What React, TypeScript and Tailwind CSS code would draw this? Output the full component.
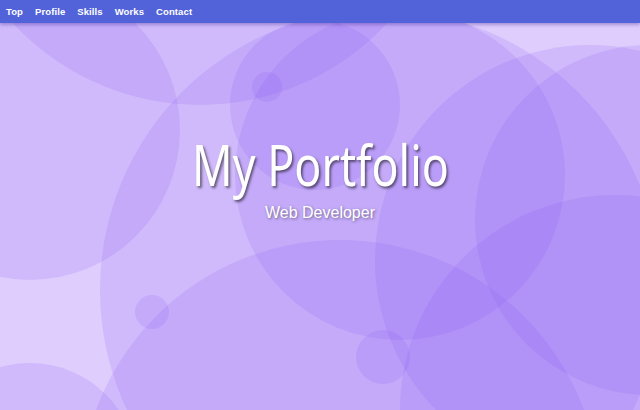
const bubbles: [number, number, number][] = [
  [30, 130, 150],
  [200, -150, 255],
  [30, 470, 107],
  [380, 290, 280],
  [340, 500, 260],
  [590, 260, 215],
  [615, 410, 215],
  [315, 105, 85],
  [400, 175, 165],
  [650, 220, 175],
  [267, 87, 15],
  [152, 312, 17],
  [383, 357, 27],
];

function Bubbles() {
  return (
    <svg className="absolute inset-0 h-full w-full" viewBox="0 0 640 410" preserveAspectRatio="none">
      {bubbles.map(([cx, cy, r], i) => (
        <circle key={i} cx={cx} cy={cy} r={r} fill="#8b5cf6" fillOpacity={0.17} />
      ))}
    </svg>
  );
}

const links = ["Top", "Profile", "Skills", "Works", "Contact"];

export default function App() {
  return (
    <div className="relative h-[410px] w-full overflow-hidden bg-[#dfcdfd] font-['Liberation_Sans',sans-serif]">
      <Bubbles />

      <nav className="relative z-10 flex h-[23px] items-center gap-[12px] bg-[#5263d9] px-[6px] pt-[1px] shadow-[0_2px_3px_rgba(60,40,150,0.35)]">
        {links.map((l) => (
          <a key={l} href="#" className="text-[9.5px] font-bold tracking-[0.1px] text-white">
            {l}
          </a>
        ))}
      </nav>

      <main className="relative flex flex-col items-center pt-[113px] text-white">
        <h1 className="scale-x-[0.8] font-['Noto_Sans',sans-serif] text-[56px] leading-[56px] [text-shadow:2px_2px_3px_rgba(0,0,0,0.55)]">
          My Portfolio
        </h1>
        <p className="mt-[10px] text-[16px] leading-[22px] [text-shadow:1px_1px_3px_rgba(0,0,0,0.45)]">
          Web Developer
        </p>
      </main>
    </div>
  );
}
